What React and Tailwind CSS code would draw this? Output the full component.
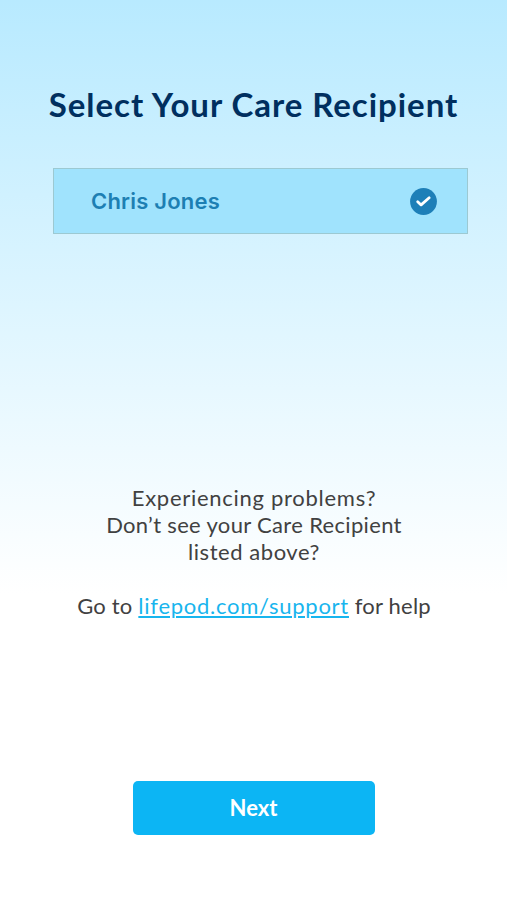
import React from 'react';

const CheckBadge = () => (
    <svg className="w-[27px] h-[27px]" viewBox="0 0 27 27" fill="none">
        <circle cx="13.5" cy="13.5" r="13.4" fill="#1d7fb8" />
        <path d="M7.7 13.7L11.1 16.9L19.2 9.8" stroke="#fff" strokeWidth="2.8" strokeLinecap="round" strokeLinejoin="round" />
    </svg>
);

const RecipientRow = ({ name }) => (
    <button className="w-[415px] h-[66px] ml-[53px] mt-[44px] pl-[37px] pr-[30px] flex items-center justify-between bg-[#a0e3fd] border border-[#9cc9d2]">
        <span className="pb-px text-[22px] leading-[30px] font-semibold tracking-[0.2px] text-[#1d7fb3] whitespace-nowrap">
            {name}
        </span>
        <CheckBadge />
    </button>
);

const App = () => (
    <main className="w-[507px] h-[900px] flex flex-col overflow-hidden font-[Inter,sans-serif] bg-linear-to-b from-[#b8eaff] to-white to-[66%]">
        <h1 className="mt-[84px] h-[40px] leading-[40px] text-center font-[Lato,sans-serif] text-[33px] font-bold tracking-[0.95px] text-[#002f5f] whitespace-nowrap">
            Select Your Care Recipient
        </h1>
        <RecipientRow name="Chris Jones" />
        <div className="mt-[250px] pl-px text-center font-[Lato,sans-serif] text-[22px] leading-[27px] text-[#414141] whitespace-nowrap">
            <p className="tracking-[0.72px]">Experiencing problems?</p>
            <p className="tracking-[0.33px]">Don’t see your Care Recipient</p>
            <p className="tracking-[0.55px]">listed above?</p>
            <p className="mt-[27px] tracking-[0.2px]">
                Go to <a className="text-[#18b5ee] underline tracking-[0.74px]">lifepod.com/support</a> for help
            </p>
        </div>
        <button className="mt-[162px] mx-auto w-[242px] h-[54px] pb-[2px] rounded-[5px] bg-[#0cb5f4] font-[Lato,sans-serif] text-white text-[22px] font-bold">
            Next
        </button>
    </main>
);

export default App;
